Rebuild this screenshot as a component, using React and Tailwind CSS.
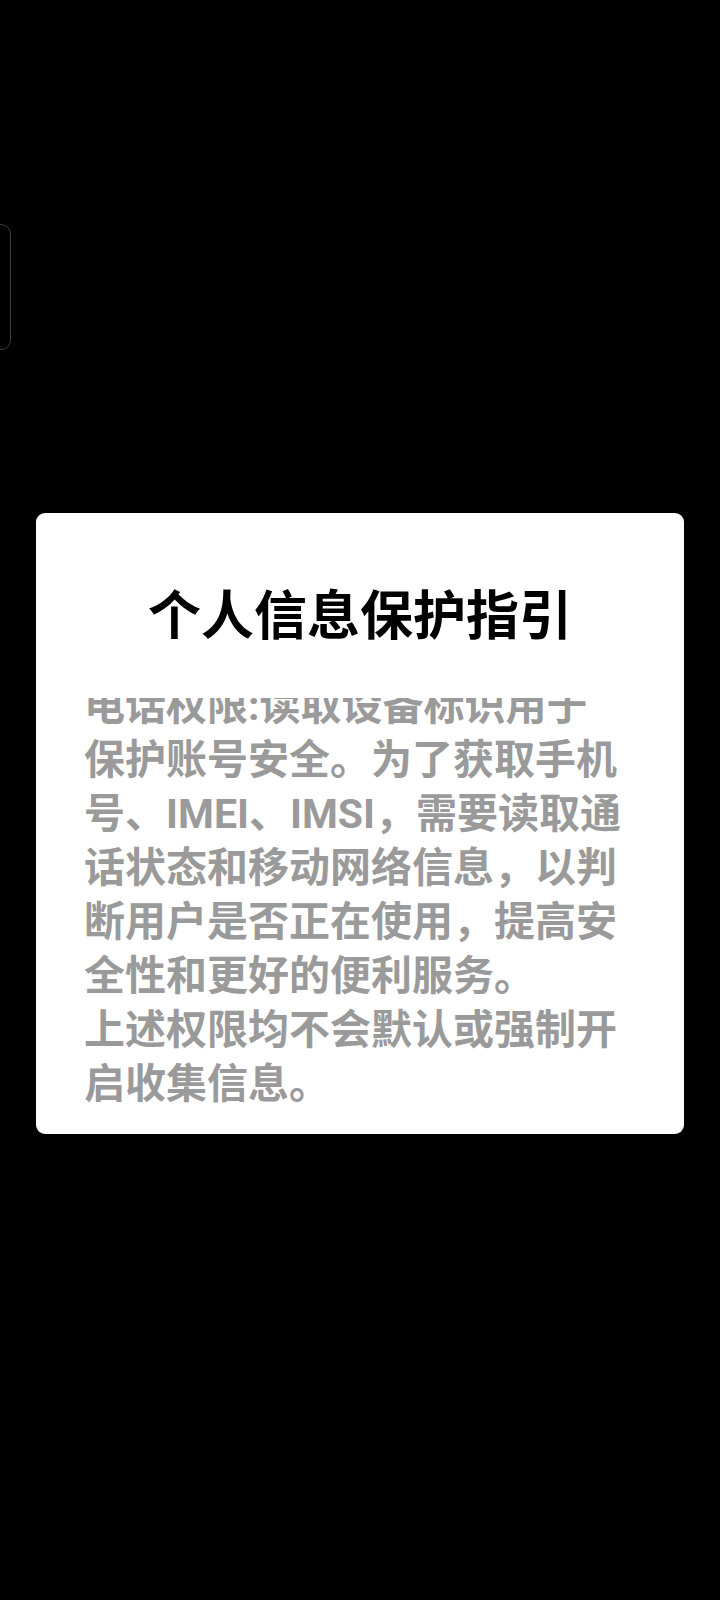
import React from 'react';

const bodyLines = [
  '电话权限:读取设备标识用于',
  '保护账号安全。为了获取手机',
  '号、IMEI、IMSI，需要读取通',
  '话状态和移动网络信息，以判',
  '断用户是否正在使用，提高安',
  '全性和更好的便利服务。',
  '上述权限均不会默认或强制开',
  '启收集信息。',
];

const App = () => {
  return (
    <div
      className="relative min-h-[1600px] w-full bg-black overflow-hidden"
      style={{ fontFamily: 'Roboto, "Noto Sans CJK SC", sans-serif' }}
    >
      {/* side handle peeking in from the left edge */}
      <div className="absolute left-[-40px] top-[224px] h-[126px] w-[51px] rounded-[10px] border border-[#3a3f45]" />

      <div className="pt-[513px] px-[36px]">
        <div className="bg-white rounded-[9px] pt-[73px] pb-[22px] px-[48px]">
          <h1 className="text-center text-[53px] leading-[62px] font-bold text-black">
            个人信息保护指引
          </h1>

          {/* scrolled text area, first line partly hidden */}
          <div className="mt-[50px] h-[414px] overflow-hidden">
            <div className="-mt-[19px] text-[41px] leading-[54px] font-bold text-[#9a9a9a]">
              {bodyLines.map((line, i) => (
                <div key={i} className="whitespace-nowrap">
                  {line}
                </div>
              ))}
            </div>
          </div>
        </div>
      </div>
    </div>
  );
};

export default App;
